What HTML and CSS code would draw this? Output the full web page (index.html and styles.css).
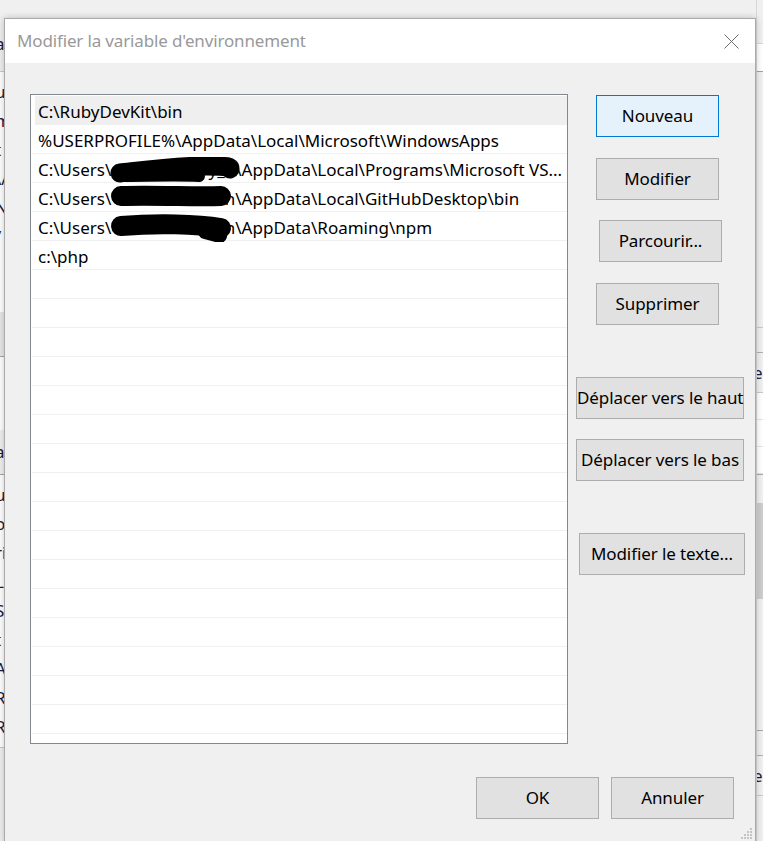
FILE: index.html
```html
<!DOCTYPE html>
<html lang="fr">
<head>
<meta charset="utf-8">
<title>Modifier la variable d'environnement</title>
<link rel="stylesheet" href="styles.css">
</head>
<body>
<div class="desktop">
  <div class="under-left">
    <div class="ul-head"><span class="frag">a</span></div>
    <div class="ul-gap"></div>
    <div class="ul-row"><span class="frag">ul</span></div>
    <div class="ul-row"><span class="frag">m</span></div>
    <div class="ul-row"><span class="frag">t</span></div>
    <div class="ul-row"><span class="frag">\A</span></div>
    <div class="ul-row"><span class="frag">N</span></div>
    <div class="ul-row"><span class="frag">/</span></div>
    <div class="ul-space"></div>
    <div class="ul-band"></div>
    <div class="ul-space2"></div>
    <div class="ul-head2"><span class="frag">a</span></div>
    <div class="ul-gap"></div>
    <div class="ul-row"><span class="frag">ul</span></div>
    <div class="ul-row"><span class="frag">o</span></div>
    <div class="ul-row"><span class="frag">ri</span></div>
    <div class="ul-row"><span class="frag">L</span></div>
    <div class="ul-row"><span class="frag">S</span></div>
    <div class="ul-row"><span class="frag">t</span></div>
    <div class="ul-row"><span class="frag">A</span></div>
    <div class="ul-row"><span class="frag">R</span></div>
    <div class="ul-row"><span class="frag">R</span></div>
    <div class="ul-foot"></div>
  </div>

  <div class="under-right">
    <div class="ur-top"></div>
    <div class="ur-bar"></div>
    <div class="ur-fill"></div>
    <div class="ur-head"></div>
    <div class="ur-btn"><span class="frag-r">er</span></div>
    <div class="ur-line"></div>
    <div class="ur-line"></div>
    <div class="ur-line"></div>
    <div class="ur-scroll"><div class="ur-thumb"></div></div>
    <div class="ur-head"></div>
    <div class="ur-btn"><span class="frag-r">er</span></div>
  </div>

  <div class="dialog">
    <div class="titlebar">
      <span class="title">Modifier la variable d'environnement</span>
      <svg class="close" width="15" height="15" viewBox="0 0 15 15"><path d="M0.5 0.5 L14.5 14.5 M14.5 0.5 L0.5 14.5" stroke="#6b6b6b" stroke-width="1" fill="none"/></svg>
    </div>
    <div class="content">
      <div class="main">
        <div class="list">
          <div class="row sel">C:\RubyDevKit\bin</div>
          <div class="row">%USERPROFILE%\AppData\Local\Microsoft\WindowsApps</div>
          <div class="row">C:\Users\<span class="redact">y_n<svg class="blob b1" width="135" height="30" viewBox="0 0 135 30"><path d="M13 16 C 40 13, 70 9, 100 9 S 121 11, 123 12" stroke="#000" stroke-width="19" stroke-linecap="round" fill="none"/><path d="M12 19 C 40 19, 70 18, 92 19" stroke="#000" stroke-width="12" stroke-linecap="round" fill="none"/></svg></span>\AppData\Local\Programs\Microsoft VS...</div>
          <div class="row">C:\Users\<span class="redact">n<svg class="blob" width="135" height="30" viewBox="0 0 135 30"><path d="M14 13 C 50 12, 90 14, 114 13" stroke="#000" stroke-width="20" stroke-linecap="round" fill="none"/></svg></span>\AppData\Local\GitHubDesktop\bin</div>
          <div class="row">C:\Users\<span class="redact">n<svg class="blob" width="135" height="30" viewBox="0 0 135 30"><path d="M14 14 C 50 11, 90 12, 114 16" stroke="#000" stroke-width="20" stroke-linecap="round" fill="none"/><path d="M98 20 L 113 24" stroke="#000" stroke-width="14" stroke-linecap="round" fill="none"/></svg></span>\AppData\Roaming\npm</div>
          <div class="row">c:\php</div>
          <div class="row"></div>
          <div class="row"></div>
          <div class="row"></div>
          <div class="row"></div>
          <div class="row"></div>
          <div class="row"></div>
          <div class="row"></div>
          <div class="row"></div>
          <div class="row"></div>
          <div class="row"></div>
          <div class="row"></div>
          <div class="row"></div>
          <div class="row"></div>
          <div class="row"></div>
          <div class="row"></div>
          <div class="row"></div>
          <div class="row"></div>
        </div>
        <div class="actions">
          <button class="btn primary b-new">Nouveau</button>
          <button class="btn b-edit">Modifier</button>
          <button class="btn b-browse">Parcourir...</button>
          <button class="btn b-del">Supprimer</button>
          <button class="btn b-up">Déplacer vers le haut</button>
          <button class="btn b-down">Déplacer vers le bas</button>
          <button class="btn b-text">Modifier le texte...</button>
        </div>
      </div>
      <div class="footer">
        <button class="btn">OK</button>
        <button class="btn">Annuler</button>
      </div>
    </div>
    <svg class="grip" width="12" height="12" viewBox="0 0 12 12">
      <rect x="9" y="0" width="2" height="2" fill="#c4c4c4"/>
      <rect x="6" y="3" width="2" height="2" fill="#c4c4c4"/>
      <rect x="9" y="3" width="2" height="2" fill="#c4c4c4"/>
      <rect x="3" y="6" width="2" height="2" fill="#c4c4c4"/>
      <rect x="6" y="6" width="2" height="2" fill="#c4c4c4"/>
      <rect x="9" y="6" width="2" height="2" fill="#c4c4c4"/>
      <rect x="0" y="9" width="2" height="2" fill="#c4c4c4"/>
      <rect x="3" y="9" width="2" height="2" fill="#c4c4c4"/>
      <rect x="6" y="9" width="2" height="2" fill="#c4c4c4"/>
      <rect x="9" y="9" width="2" height="2" fill="#c4c4c4"/>
    </svg>
  </div>
</div>
</body>
</html>
```

FILE: styles.css
```css
* { box-sizing: border-box; }

html, body {
  margin: 0;
  padding: 0;
}

body {
  width: 763px;
  height: 841px;
  overflow: hidden;
  background: #f0f0f0;
  font-family: "Noto Sans", "Open Sans", sans-serif;
  font-size: 17px;
  color: #000;
}

.desktop {
  position: relative;
  width: 763px;
  height: 841px;
  overflow: hidden;
}

/* window behind, left edge */
.under-left {
  position: absolute;
  left: 0;
  top: 0;
  width: 4px;
  height: 841px;
  overflow: hidden;
  background: #fff;
  white-space: nowrap;
}
.frag { display: inline-block; margin-left: -5px; color: #1a1a40; }
.ul-head {
  height: 72px;
  padding-top: 30px;
  line-height: 28px;
  background: #f0f0f0;
  border-bottom: 1px solid #c8c8c8;
}
.ul-gap { height: 5px; }
.ul-row { height: 29px; line-height: 29px; }
.ul-space { height: 61px; }
.ul-band { height: 45px; background: #e8e8e8; border-bottom: 1px solid #a8a8a8; }
.ul-space2 { height: 73px; background: #fff; }
.ul-head2 {
  height: 45px;
  line-height: 36px;
  padding-top: 4px;
  background: #f0f0f0;
  border-bottom: 1px solid #a8a8a8;
}
.ul-foot { margin-top: 6px; height: 120px; background: #f0f0f0; border-top: 1px solid #c8c8c8; }

/* window behind, right edge */
.under-right {
  position: absolute;
  left: 756px;
  top: 0;
  width: 7px;
  height: 841px;
  overflow: hidden;
  background: #f0f0f0;
  white-space: nowrap;
  border-left: 1px solid #d8d8d8;
}
.frag-r { display: inline-block; margin-left: -4px; color: #1a1a40; }
.ur-top { height: 44px; border-bottom: 1px solid #d8d8d8; }
.ur-bar { height: 28px; background: #fff; border-bottom: 1px solid #a0a0a0; }
.ur-fill { height: 256px; border-bottom: 1px solid #c8c8c8; }
.ur-head { height: 25px; border-bottom: 1px solid #b0b0b0; }
.ur-btn { height: 40px; line-height: 40px; border-bottom: 1px solid #c8c8c8; }
.ur-line { height: 27px; background: #fff; border-bottom: 1px solid #e4e4e4; }
.ur-scroll { height: 257px; padding-top: 28px; border-top: 1px solid #a8a8a8; border-bottom: 1px solid #a8a8a8; }
.ur-thumb { width: 100%; height: 96px; background: #cdcdcd; }

/* dialog */
.dialog {
  position: absolute;
  left: 4px;
  top: 18px;
  width: 752px;
  height: 826px;
  border: 1px solid #aaaaaa;
  background: #f0f0f0;
  box-shadow: 0 0 7px rgba(0, 0, 0, 0.22);
  display: flex;
  flex-direction: column;
}

.titlebar {
  height: 44px;
  flex: none;
  background: #fff;
  display: flex;
  align-items: center;
  justify-content: space-between;
  padding: 0 16px 0 12px;
}

.title {
  color: #999999;
  font-size: 17px;
  letter-spacing: -0.15px;
  line-height: 44px;
  white-space: nowrap;
}

.close { display: block; }

.content {
  flex: 1;
}

.main {
  display: flex;
  align-items: flex-start;
  padding: 31px 0 0 25px;
}

.list {
  flex: none;
  width: 538px;
  height: 650px;
  border: 1px solid #828790;
  background: #fff;
  padding: 1px 0 0 1px;
  overflow: hidden;
}

.row {
  height: 29px;
  border-bottom: 1px solid #f0f0f0;
  padding: 3px 0 0 6px;
  line-height: 25px;
  white-space: nowrap;
}

.row.sel {
  background: linear-gradient(90deg, #fff 0 3px, #efefef 3px);
  border-bottom-color: transparent;
}

.redact {
  display: inline-block;
  position: relative;
  width: 124px;
  text-align: right;
  vertical-align: top;
}

.blob {
  position: absolute;
  left: -4px;
  top: -3px;
}

.blob.b1 {
  top: 0;
}

.actions {
  margin-left: 8px;
  display: flex;
  flex-direction: column;
  align-items: flex-start;
}

.btn {
  display: block;
  width: 123px;
  height: 42px;
  padding: 0;
  border: 1px solid #adadad;
  border-radius: 0;
  background: #e1e1e1;
  font-family: inherit;
  font-size: 17px;
  letter-spacing: -0.1px;
  line-height: 40px;
  color: #000;
  text-align: center;
  white-space: nowrap;
}

.btn.primary {
  background: #e5f1fb;
  border-color: #0078d7;
}

.b-new { margin: 1px 0 0 20px; }
.b-edit { margin: 21px 0 0 20px; }
.b-browse { margin: 20px 0 0 23px; }
.b-del { margin: 21px 0 0 20px; }
.b-up { margin: 52px 0 0 0; width: 168px; }
.b-down { margin: 20px 0 0 0; width: 168px; }
.b-text { margin: 52px 0 0 3px; width: 166px; }

.footer {
  display: flex;
  justify-content: flex-end;
  gap: 12px;
  margin-top: 33px;
  padding-right: 21px;
}

.grip {
  position: absolute;
  right: 2px;
  bottom: 3px;
}
```
